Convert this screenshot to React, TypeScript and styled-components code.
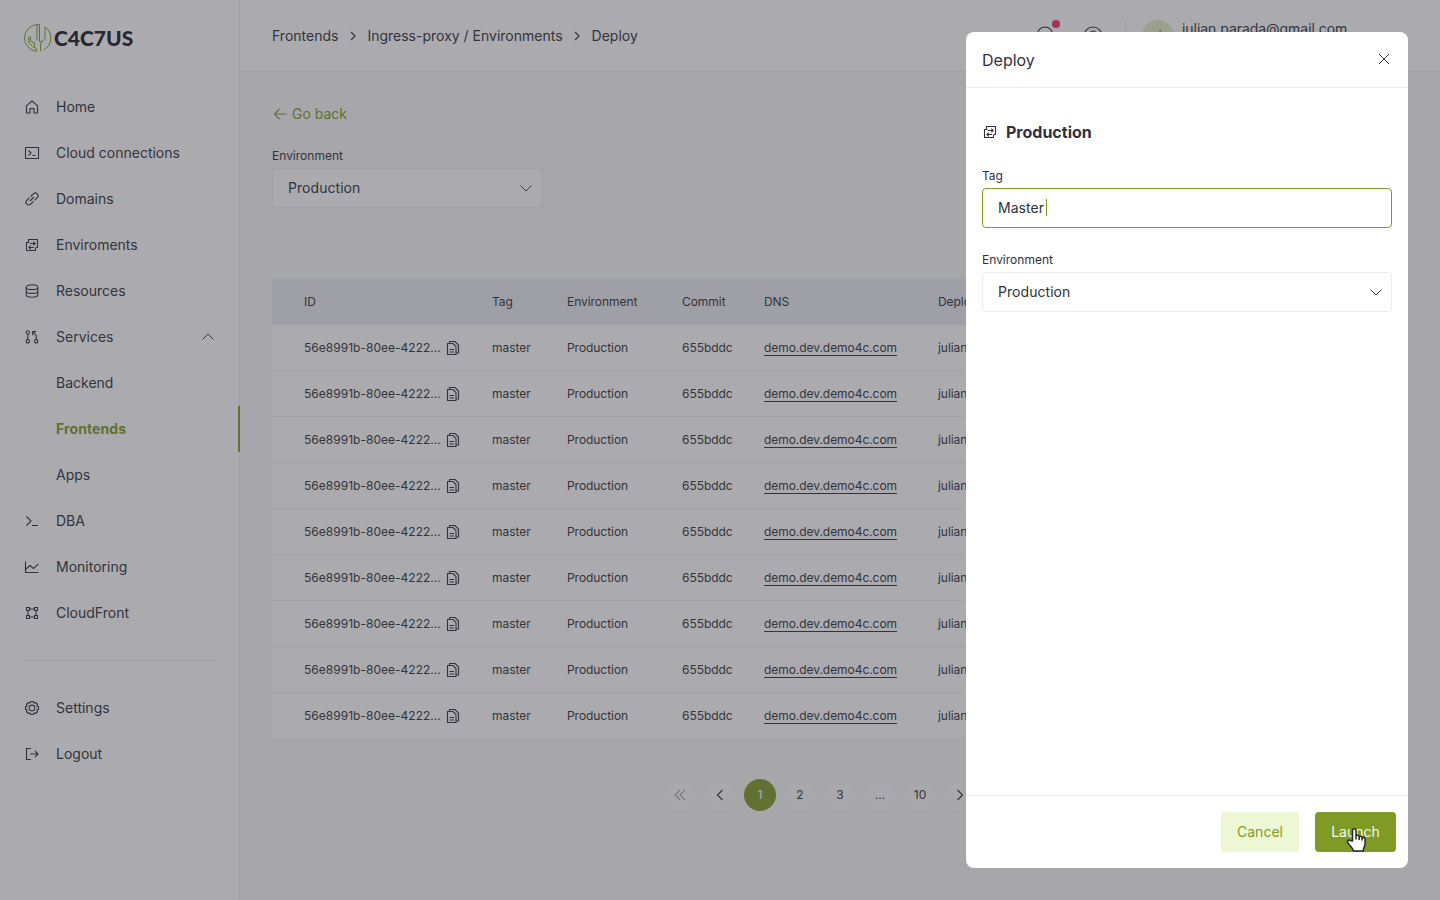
import React from 'react';
import styled, { createGlobalStyle, css } from 'styled-components';

const colors = {
  text: '#303138',
  green: '#7f9b26',
  greenSoft: '#eef7d4',
  surface: '#ffffff',
  page: '#f7f7f8',
  border: '#ececee',
  tableHead: '#e9ebf2',
};

const GlobalStyle = createGlobalStyle`
  * {
    box-sizing: border-box;
  }

  body {
    margin: 0;
    overflow: hidden;
    color: ${colors.text};
    background: ${colors.page};
    font-family: Inter, 'Liberation Sans', sans-serif;
    font-size: 14px;
  }

  svg {
    flex-shrink: 0;
  }
`;

const Layout = styled.div`
  display: flex;
  width: 1440px;
  height: 900px;
`;

const Sidebar = styled.aside`
  display: flex;
  flex-direction: column;
  flex: 0 0 240px;
  background: ${colors.surface};
  border-right: 1px solid ${colors.border};
`;

const Brand = styled.div`
  display: flex;
  align-items: center;
  height: 76px;
  padding-left: 24px;
  margin-bottom: 8px;
`;

const BrandName = styled.span`
  margin-left: 2px;
  padding-bottom: 1px;
  font-family: Lato, sans-serif;
  font-size: 21px;
  font-weight: 900;
  line-height: 28px;
  color: #1d1d26;
`;

const NavItem = styled.a<{ $active?: boolean }>`
  position: relative;
  display: flex;
  align-items: center;
  height: 46px;
  padding: 0 23px 0 24px;
  gap: 16px;

  ${({ $active }) =>
    $active &&
    css`
      color: ${colors.green};
      font-weight: 700;
      letter-spacing: 0.1px;

      &::after {
        content: '';
        position: absolute;
        right: -1px;
        width: 2px;
        height: 46px;
        background: ${colors.green};
      }
    `}
`;

const NavLabel = styled.span`
  flex: 1;
  padding-bottom: 2px;
`;

const IconSlot = styled.span`
  width: 16px;
  height: 16px;
`;

const Divider = styled.hr`
  width: 192px;
  height: 1px;
  margin: 24px 0 24px 24px;
  border: 0;
  background: #e8e8eb;
`;

const Main = styled.main`
  flex: 1;
  min-width: 0;
`;

const TopBar = styled.header`
  display: flex;
  align-items: center;
  height: 72px;
  padding: 0 32px;
  background: ${colors.surface};
  border-bottom: 1px solid ${colors.border};
`;

const Breadcrumbs = styled.nav`
  display: flex;
  align-items: center;
  flex: 1;
  gap: 6.5px;
`;

const Tools = styled.div`
  display: flex;
  align-items: center;
  width: 375px;
  height: 40px;
`;

const ToolButton = styled.span`
  position: relative;
  display: flex;
  width: 24px;
  margin: 4px 24px 0 0;
`;

const Dot = styled.i`
  position: absolute;
  top: -6px;
  right: -3px;
  width: 8px;
  height: 8px;
  border-radius: 50%;
  background: #f52f61;
`;

const Separator = styled.span`
  width: 1px;
  height: 32px;
  margin-left: -4px;
  background: ${colors.border};
`;

const Avatar = styled.span`
  display: flex;
  align-items: center;
  justify-content: center;
  width: 32px;
  height: 32px;
  margin: 0 8px 0 16px;
  border-radius: 50%;
  background: #e4edc5;
  color: ${colors.green};
`;

const Email = styled.span`
  padding-bottom: 15px;
  letter-spacing: -0.05px;
`;

const Content = styled.section`
  padding: 32px 32px 0;
`;

const BackLink = styled.a`
  display: flex;
  align-items: center;
  height: 20px;
  gap: 4px;
  margin-bottom: 23px;
  color: ${colors.green};

  span {
    padding-bottom: 2px;
  }
`;

const Label = styled.label`
  display: block;
  height: 21px;
  font-size: 12px;
  line-height: 17px;
`;

const Field = styled.div<{ $width: number; $focused?: boolean }>`
  display: flex;
  align-items: center;
  width: ${({ $width }) => $width}px;
  height: 40px;
  padding: 0 7px 0 15px;
  border: 1px solid ${({ $focused }) => ($focused ? colors.green : colors.border)};
  border-radius: 4px;
  background: ${colors.surface};
  letter-spacing: 0.05px;
`;

const FieldValue = styled.span`
  flex: 1;
  display: flex;
  align-items: center;
  padding-bottom: 2px;
`;

const Caret = styled.i`
  width: 1px;
  height: 17px;
  margin-left: 2px;
  background: ${colors.green};
`;

const Table = styled.div`
  margin-top: 71px;
  font-size: 12px;
  letter-spacing: -0.05px;
`;

const Row = styled.div<{ $head?: boolean }>`
  display: grid;
  grid-template-columns: 188px 75px 115px 82px 174px 1fr;
  align-items: center;
  height: 46px;
  padding-left: 32px;
  background: ${({ $head }) => ($head ? colors.tableHead : colors.surface)};
  border-bottom: 1px solid ${({ $head }) => ($head ? colors.tableHead : '#f2f2f4')};
`;

const IdCell = styled.span`
  display: flex;
  align-items: center;
  gap: 4px;

  span {
    width: 137px;
    white-space: nowrap;
    letter-spacing: 0.02px;
  }
`;

const DnsLink = styled.a`
  justify-self: start;
  border-bottom: 1px solid ${colors.text};
  line-height: 15px;
`;

const Pagination = styled.nav`
  display: flex;
  gap: 8px;
  margin: 40px 0 0 392px;
  font-size: 12px;
`;

const PageButton = styled.span<{ $active?: boolean; $disabled?: boolean }>`
  display: flex;
  align-items: center;
  justify-content: center;
  width: 32px;
  height: 32px;
  padding-bottom: 1px;
  border-radius: 50%;
  background: ${({ $active }) => ($active ? colors.green : '#fafafb')};
  color: ${({ $active }) => ($active ? '#fff' : colors.text)};

  svg {
    opacity: ${({ $disabled }) => ($disabled ? 0.4 : 1)};
  }
`;

const Overlay = styled.div`
  position: fixed;
  inset: 0;
  background: rgba(55, 55, 64, 0.42);
`;

const Drawer = styled.aside`
  position: fixed;
  top: 32px;
  right: 32px;
  bottom: 32px;
  display: flex;
  flex-direction: column;
  width: 442px;
  border-radius: 8px;
  background: ${colors.surface};
`;

const DrawerHeader = styled.header`
  display: flex;
  align-items: center;
  justify-content: space-between;
  height: 56px;
  padding: 0 16px;
  border-bottom: 1px solid ${colors.border};
  font-size: 16px;

  svg {
    margin-bottom: 2px;
  }
`;

const DrawerBody = styled.div`
  flex: 1;
  padding: 32px 16px;
`;

const DrawerTitle = styled.h2`
  display: flex;
  align-items: center;
  height: 24px;
  gap: 8px;
  margin: 0 0 23px;
  font-size: 16px;
  font-weight: 700;
`;

const FormGroup = styled.div`
  margin-bottom: 23px;
`;

const DrawerFooter = styled.footer`
  display: flex;
  align-items: center;
  justify-content: flex-end;
  gap: 16px;
  height: 73px;
  padding-right: 12px;
  border-top: 1px solid ${colors.border};
`;

const Button = styled.button<{ $primary?: boolean }>`
  width: ${({ $primary }) => ($primary ? 81 : 78)}px;
  height: 40px;
  padding: 0 0 2px;
  border: 0;
  border-radius: 4px;
  background: ${({ $primary }) => ($primary ? colors.green : colors.greenSoft)};
  color: ${({ $primary }) => ($primary ? '#f4f8e6' : colors.green)};
  font-family: inherit;
  font-size: 14px;
`;

const Pointer = styled.svg`
  position: fixed;
  left: 1344px;
  top: 827px;
`;

const icons = {
  home: 'M2.500 14V6.700L8 2l5.500 4.700V14H10V9.500H6V14Z',
  terminalBox: 'M1.500 2.500h13v11h-13ZM4.500 5.500 7 8l-2.500 2.500M8.500 10.500h3',
  link: 'M6 10l4-4M5.500 6.700 2.800 9.400a2.650 2.650 0 0 0 3.800 3.800l2.700-2.700M10.500 9.300l2.700-2.700a2.650 2.650 0 0 0-3.800-3.800L6.700 5.500',
  environments: 'M4.500 5v-2.500h9v8h-2M11.500 11v2.500h-9v-8h3M6 6.500h5M9.300 4.700l1.800 1.800-1.800 1.800M10 10.500H5M6.700 8.700l-1.800 1.800 1.800 1.800',
  database: 'M2.200 4.200c0-1.300 2.500-2.400 5.800-2.400s5.800 1.100 5.800 2.400-2.500 2.400-5.800 2.400S2.200 5.500 2.200 4.200v7.600c0 1.300 2.500 2.400 5.800 2.400s5.800-1.100 5.800-2.400V4.200M2.200 8c0 1.300 2.500 2.400 5.800 2.400s5.800-1.100 5.800-2.400',
  services: 'M5.500 3.500a1.700 1.700 0 1 1-3.400 0 1.700 1.700 0 0 1 3.400 0ZM5.500 12.300a1.700 1.700 0 1 1-3.400 0 1.700 1.700 0 0 1 3.400 0ZM13.900 12.300a1.700 1.700 0 1 1-3.400 0 1.700 1.700 0 0 1 3.400 0ZM3.800 5.200v5.400M12.200 10.600V6.500L9 3M8.700 6.200V2.600h3.300',
  prompt: 'M2.500 3.500 7 8l-4.500 4.500M8 12.500h6',
  chart: 'M1.500 2.500v11h13M2 10l4-3.500 3.500 3 4.800-4.300',
  frame: 'M2.500 2.500h3v3h-3ZM10.500 2.500h3v3h-3ZM2.500 10.500h3v3h-3ZM10.500 10.500h3v3h-3ZM5.500 4h5M5.500 12h5M4 5.500v5M12 5.500v5',
  gear: 'M6.700 1.500h2.600l.7 1.600 1.700-.6 1.800 1.800-.6 1.700 1.600.7v2.600l-1.600.7.6 1.700-1.800 1.800-1.700-.6-.7 1.600H6.700L6 12.900l-1.700.6-1.800-1.800.6-1.700-1.600-.7V6.700L3.100 6l-.6-1.700 1.800-1.800 1.700.6ZM10.900 8a2.900 2.900 0 1 1-5.800 0 2.900 2.900 0 0 1 5.800 0Z',
  logout: 'M7 2.500H2.500v11H7M6 8h8M11 5l3 3-3 3',
  up: 'M2.500 10.500 8 5l5.500 5.500',
  down: 'M2.500 5.500 8 11l5.500-5.500',
  right: 'M6 4l4 4-4 4',
  chevronLeft: 'M10.500 3l-5 5 5 5',
  chevronRight: 'M5.500 3l5 5-5 5',
  first: 'M8 3 3 8l5 5M13 3 8 8l5 5',
  back: 'M2.500 8h12M7.500 3l-5 5 5 5',
  close: 'M3 3l10 10M13 3 3 13',
  copy: 'M2.500 3.500h5.500l3 3v8H2.500ZM4.500 3.500v-2H10l3.500 3.500v8H11M4.500 9.500h4.500M4.500 12h4.500',
};

type IconName = keyof typeof icons;

const Icon: React.FC<{ name: IconName; thin?: boolean }> = ({ name, thin }) => (
  <svg
    width="16"
    height="16"
    viewBox="0 0 16 16"
    fill="none"
    stroke="currentColor"
    strokeWidth={thin ? 0.95 : 1.1}
  >
    <path d={icons[name]} />
  </svg>
);

const LogoMark = () => (
  <svg width="28" height="28" viewBox="0 0 28 28" fill="none" stroke={colors.green} strokeWidth="1">
    <path d="M15.500 17.500V.6H13A13.400 13.400 0 0 0 12.500 27.300V24.500L8.500 22.500 4.800 18.500V12.500" />
    <path d="M13 1v15.500M6.500 12.500v4.500l4 2v3.500M15.500 17.500h2.500l3-3V3A13.400 13.400 0 0 1 19.500 26M16.500 27.300V20l1.500-2.500" />
  </svg>
);

const navItems: { label: string; icon?: IconName; active?: boolean; open?: boolean }[] = [
  { label: 'Home', icon: 'home' },
  { label: 'Cloud connections', icon: 'terminalBox' },
  { label: 'Domains', icon: 'link' },
  { label: 'Enviroments', icon: 'environments' },
  { label: 'Resources', icon: 'database' },
  { label: 'Services', icon: 'services', open: true },
  { label: 'Backend' },
  { label: 'Frontends', active: true },
  { label: 'Apps' },
  { label: 'DBA', icon: 'prompt' },
  { label: 'Monitoring', icon: 'chart' },
  { label: 'CloudFront', icon: 'frame' },
];

const deployments = Array.from({ length: 9 }, (_, index) => ({
  key: index,
  id: '56e8991b-80ee-4222...',
  tag: 'master',
  environment: 'Production',
  commit: '655bddc',
  dns: 'demo.dev.demo4c.com',
  deployedBy: 'julian',
}));

const App: React.FC = () => {
  return (
    <>
      <GlobalStyle />
      <Layout>
        <Sidebar>
          <Brand>
            <LogoMark />
            <BrandName>C4C7US</BrandName>
          </Brand>
          {navItems.map(item => (
            <NavItem key={item.label} $active={item.active}>
              <IconSlot>{item.icon && <Icon name={item.icon} />}</IconSlot>
              <NavLabel>{item.label}</NavLabel>
              {item.open && <Icon name="up" thin />}
            </NavItem>
          ))}
          <Divider />
          <NavItem>
            <Icon name="gear" />
            <NavLabel>Settings</NavLabel>
          </NavItem>
          <NavItem>
            <Icon name="logout" />
            <NavLabel>Logout</NavLabel>
          </NavItem>
        </Sidebar>

        <Main>
          <TopBar>
            <Breadcrumbs>
              <span>Frontends</span>
              <Icon name="right" />
              <span>Ingress-proxy / Environments</span>
              <Icon name="right" />
              <span>Deploy</span>
            </Breadcrumbs>
            <Tools>
              <ToolButton>
                <svg width="24" height="24" viewBox="0 0 24 24" fill="none" stroke="currentColor" strokeWidth="1.2">
                  <path d="M4.500 17V8.500a7.500 7.500 0 0 1 15 0V17Z" />
                </svg>
                <Dot />
              </ToolButton>
              <ToolButton>
                <svg width="24" height="24" viewBox="0 0 24 24" fill="none" stroke="currentColor" strokeWidth="1.2">
                  <circle cx="12" cy="10" r="9" />
                  <circle cx="12" cy="8" r="3" />
                </svg>
              </ToolButton>
              <Separator />
              <Avatar>J</Avatar>
              <Email>julian.parada@gmail.com</Email>
            </Tools>
          </TopBar>

          <Content>
            <BackLink>
              <Icon name="back" />
              <span>Go back</span>
            </BackLink>
            <Label>Environment</Label>
            <Field $width={270}>
              <FieldValue>Production</FieldValue>
              <Icon name="down" thin />
            </Field>

            <Table>
              <Row $head>
                <span>ID</span>
                <span>Tag</span>
                <span>Environment</span>
                <span>Commit</span>
                <span>DNS</span>
                <span>Deployed by</span>
              </Row>
              {deployments.map(row => (
                <Row key={row.key}>
                  <IdCell>
                    <span>{row.id}</span>
                    <Icon name="copy" />
                  </IdCell>
                  <span>{row.tag}</span>
                  <span>{row.environment}</span>
                  <span>{row.commit}</span>
                  <DnsLink>{row.dns}</DnsLink>
                  <span>{row.deployedBy}</span>
                </Row>
              ))}
            </Table>

            <Pagination>
              <PageButton $disabled>
                <Icon name="first" />
              </PageButton>
              <PageButton>
                <Icon name="chevronLeft" />
              </PageButton>
              <PageButton $active>1</PageButton>
              <PageButton>2</PageButton>
              <PageButton>3</PageButton>
              <PageButton>...</PageButton>
              <PageButton>10</PageButton>
              <PageButton>
                <Icon name="chevronRight" />
              </PageButton>
            </Pagination>
          </Content>
        </Main>
      </Layout>

      <Overlay />

      <Drawer>
        <DrawerHeader>
          Deploy
          <Icon name="close" thin />
        </DrawerHeader>
        <DrawerBody>
          <DrawerTitle>
            <Icon name="environments" />
            Production
          </DrawerTitle>
          <FormGroup>
            <Label>Tag</Label>
            <Field $width={410} $focused>
              <FieldValue>
                Master
                <Caret />
              </FieldValue>
            </Field>
          </FormGroup>
          <FormGroup>
            <Label>Environment</Label>
            <Field $width={410}>
              <FieldValue>Production</FieldValue>
              <Icon name="down" thin />
            </Field>
          </FormGroup>
        </DrawerBody>
        <DrawerFooter>
          <Button>Cancel</Button>
          <Button $primary>Launch</Button>
        </DrawerFooter>
      </Drawer>

      <Pointer width="24" height="26" viewBox="0 0 24 26" fill="#fff" stroke="#26272c" strokeWidth="1.500">
        <path d="M8.500 14V3.500c0-2.300 3.500-2.300 3.500 0V9c.5-1.300 3-1 3.200.7.700-1 2.800-.6 2.900 1 1.200-.8 3 0 3 1.800v4c0 2.500-1.600 4-2 7.500H9.500c-.6-3-3.500-5-5.300-7.800-1.700-2.700.7-4.200 2.300-2.400Z" />
        <path d="M12 9v3.500M15.200 10v3M18.100 11v2.500" />
      </Pointer>
    </>
  );
};

export default App;
